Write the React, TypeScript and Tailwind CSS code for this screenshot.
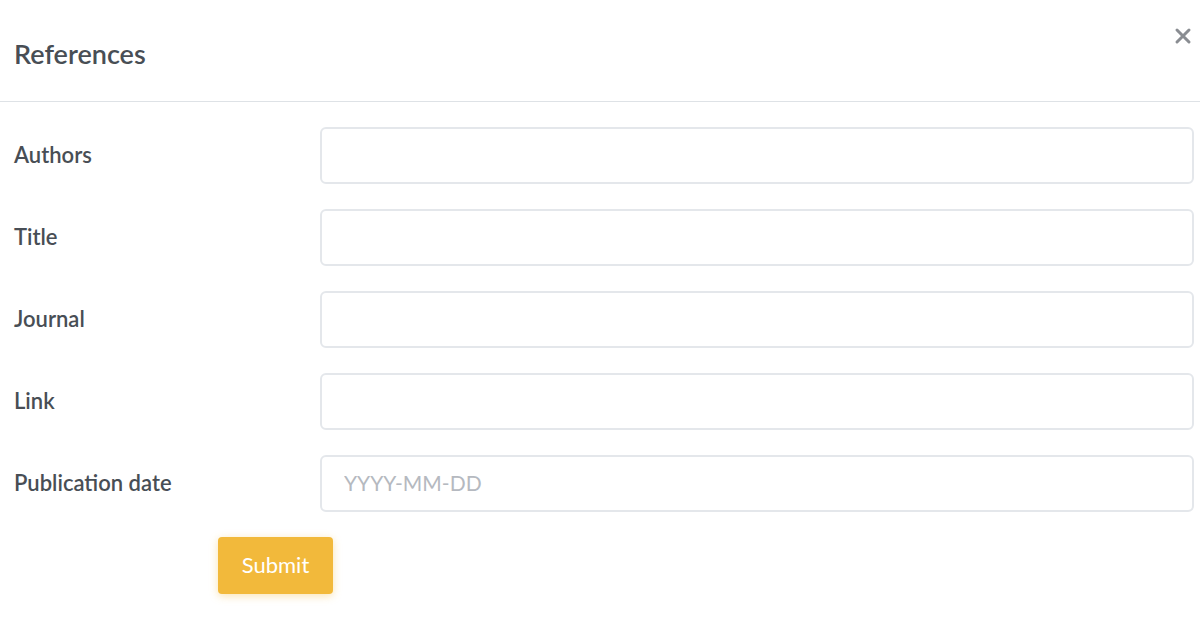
export default function App() {
  const fields = ["Authors", "Title", "Journal", "Link", "Publication date"];
  return (
    <div className="h-[627px] w-[1200px] bg-white font-['Lato','Noto_Sans',sans-serif] text-[#484e55]">
      <div className="flex h-[102px] items-center justify-between border-b border-[#dee2e6] pl-[14px] pr-[8px]">
        <h2 className="pt-[7px] text-[27px] font-semibold">References</h2>
        <button className="mb-[30px] text-[#8a8d92]">
          <svg width="18" height="18" viewBox="0 0 18 18" fill="none" stroke="currentColor" strokeWidth="3" strokeLinecap="round">
            <path d="M3 3l12 12M15 3L3 15" />
          </svg>
        </button>
      </div>
      <form className="flex flex-col gap-[25px] pt-[25px] pl-[14px] pr-[6px]">
        {fields.map((f) => (
          <div key={f} className="flex items-center">
            <label className="w-[306px] pb-[2px] text-[22px] font-semibold">{f}</label>
            <input
              placeholder={f === "Publication date" ? "YYYY-MM-DD" : ""}
              className="h-[57px] flex-1 rounded-[6px] border-2 border-[#e4e7eb] px-[22px] pb-[2px] text-[21px] placeholder:text-[#b5b9c0] outline-none"
            />
          </div>
        ))}
        <div className="pl-[204px]">
          <button
            type="button"
            className="h-[57px] w-[115px] rounded-[4px] bg-[#f2b93b] pb-[2px] text-[22px] font-normal text-white shadow-[0_2px_8px_rgba(242,185,59,0.4)]"
          >
            Submit
          </button>
        </div>
      </form>
    </div>
  );
}
